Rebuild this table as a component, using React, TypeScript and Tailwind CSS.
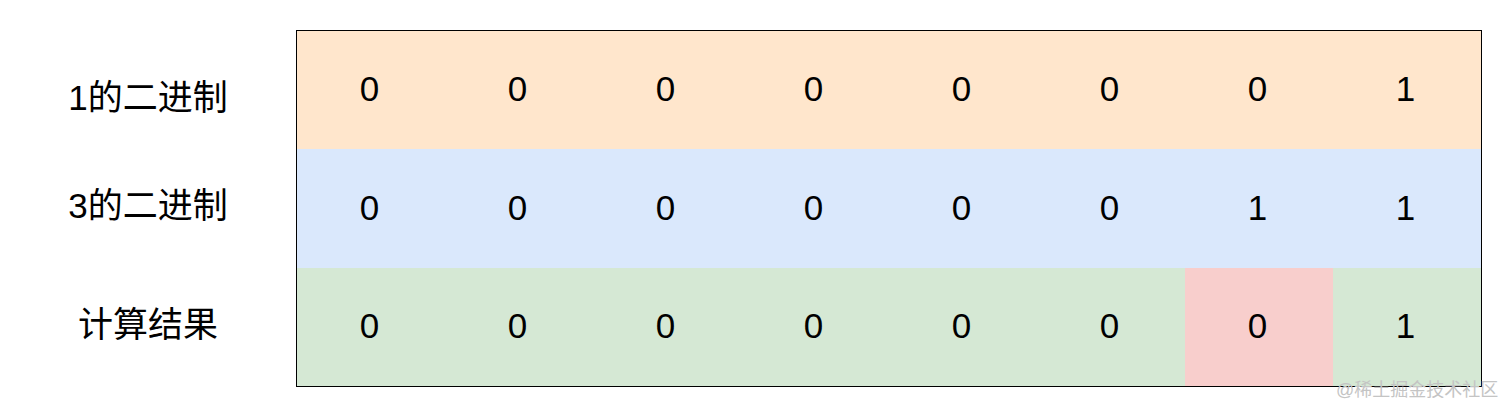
const rows = [
  { label: "1的二进制", bits: [0, 0, 0, 0, 0, 0, 0, 1], bg: "bg-[#ffe6cc]", h: "h-[118px]", shift: "pt-[14px]" },
  { label: "3的二进制", bits: [0, 0, 0, 0, 0, 0, 1, 1], bg: "bg-[#dae8fc]", h: "h-[119px]", shift: "pb-[6px]" },
  { label: "计算结果", bits: [0, 0, 0, 0, 0, 0, 0, 1], bg: "bg-[#d5e8d4]", h: "h-[118px]", shift: "pb-[6px]" },
];

export default function App() {
  return (
    <div
      className="relative w-[1512px] h-[417px] bg-white text-black overflow-hidden"
      style={{ fontFamily: '"Liberation Sans", "Noto Sans CJK SC", sans-serif' }}
    >
      <div className="flex pt-[30px]">
        <div className="w-[296px] flex flex-col pt-px">
          {rows.map((r) => (
            <div key={r.label} className={`${r.h} ${r.shift} flex items-center justify-center text-[35px] leading-none`}>
              {r.label}
            </div>
          ))}
        </div>
        <div className="w-[1186px] border border-black">
          {rows.map((r, ri) => (
            <div key={r.label} className={`${r.h} ${r.bg} grid grid-cols-8`}>
              {r.bits.map((b, i) => (
                <div
                  key={i}
                  className={`flex items-center justify-center text-[35px] leading-none pb-[3px] pr-[3px] ${
                    ri === 2 && i === 6 ? "bg-[#f8cecc]" : ""
                  }`}
                >
                  {b}
                </div>
              ))}
            </div>
          ))}
        </div>
      </div>
      <div className="absolute left-[1336px] top-[381px] text-[18px] leading-none text-[#c4c4c4] whitespace-nowrap">
        @稀土掘金技术社区
      </div>
    </div>
  );
}
